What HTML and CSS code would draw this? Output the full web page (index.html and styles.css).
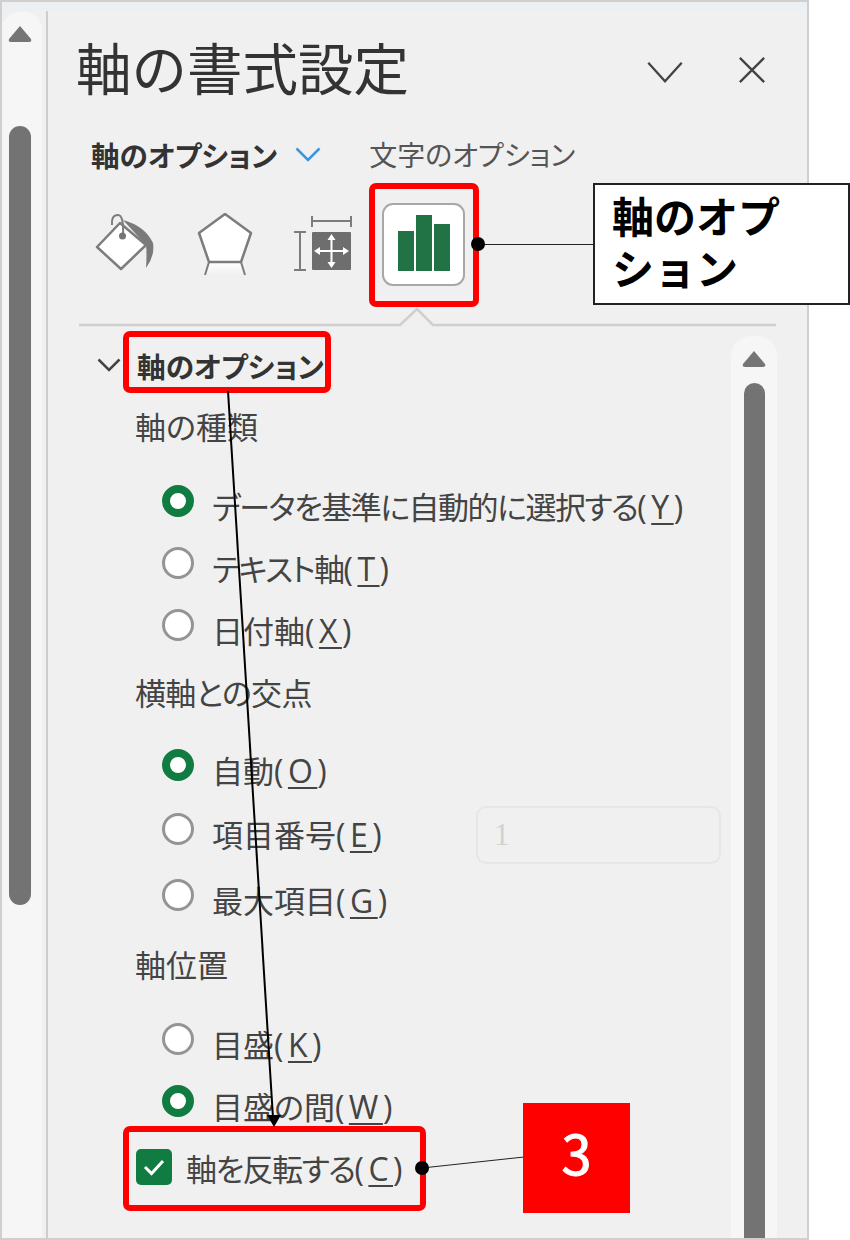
FILE: index.html
```html
<!DOCTYPE html>
<html lang="ja">
<head>
<meta charset="utf-8">
<title>軸の書式設定</title>
<link rel="stylesheet" href="styles.css">
</head>
<body>
<div class="page">
  <div class="pane">
    <div class="titlebar"></div>
    <div class="pane-body">
      <div class="rail">
        <div class="rail-track">
          <svg class="arrow-up" viewBox="0 0 24 18"><path d="M12 1 L23 14 Q24 17 21 17 L3 17 Q0 17 1 14 Z"/></svg>
          <div class="thumb thumb-left"></div>
        </div>
      </div>
      <div class="main">
        <div class="header">
          <h1 class="title">軸の書式設定</h1>
          <div class="header-actions">
            <svg class="hdr-icon" viewBox="0 0 40 28"><path d="M2 4 L20 24 L38 4"/></svg>
            <svg class="hdr-icon hdr-close" viewBox="0 0 30 30"><path d="M2 2 L28 28 M28 2 L2 28"/></svg>
          </div>
        </div>
        <div class="tabs">
          <span class="tab-active">軸のオプション</span>
          <svg class="tab-chevron" viewBox="0 0 26 15"><path d="M1.500 1.500 L13 13 L24.500 1.500"/></svg>
          <span class="tab-other">文字のオプション</span>
        </div>
        <div class="icon-row">
          <svg class="ico ico-fill" viewBox="0 0 64 64">
            <path class="ico-grey" d="M28 8 Q50 14 58 31 Q60 44 51 56 Q52 42 51 33 Z"/>
            <path class="ico-shape" d="M2 35 L25 11 L51 33 L26 57 Z"/>
            <path class="ico-line" d="M17 13 Q16 3 23 3 Q29 3 28 24"/>
            <circle class="ico-dot" cx="27.500" cy="24" r="3.500"/>
          </svg>
          <svg class="ico ico-shapeicon" viewBox="0 0 60 66">
            <defs>
              <linearGradient id="fade" x1="0" y1="0" x2="0" y2="1">
                <stop offset="0" stop-color="#fff"/>
                <stop offset="1" stop-color="#f0f0f0"/>
              </linearGradient>
            </defs>
            <path fill="url(#fade)" d="M14 49 H46 L50 62 H10 Z"/>
            <path class="ico-shape" d="M30 1 L56 20 L46 49 L14 49 L4 20 Z"/>
            <path class="ico-line" d="M14 49 L10 62 M46 49 L50 62"/>
          </svg>
          <svg class="ico ico-size" viewBox="0 0 60 62">
            <path class="ico-line" d="M0 20 H12 M6 20 V58 M0 58 H12 M18 9 H57 M18 4 V15 M57 4 V15"/>
            <rect class="ico-block" x="18" y="20" width="39" height="38" rx="1"/>
            <path class="ico-cross" d="M37.500 26 V52 M24 39 H51"/>
            <path class="ico-head" d="M37.500 22 L41.500 28 H33.500 Z M37.500 56 L41.500 50 H33.500 Z M20 39 L26 35 V43 Z M55 39 L49 35 V43 Z"/>
          </svg>
          <div class="ico-btn">
            <svg class="ico-bars" viewBox="0 0 54 56">
              <rect x="0" y="16" width="16" height="40"/>
              <rect x="18" y="0" width="16" height="56"/>
              <rect x="36" y="9" width="16" height="47"/>
            </svg>
          </div>
        </div>
        <svg class="separator" viewBox="0 0 740 20"><path d="M31 18 H352 L369 2 L385 18 H728"/></svg>
        <div class="content">
          <div class="options">
            <div class="section-head">
              <svg class="section-chevron" viewBox="0 0 24 14"><path d="M1.500 1.500 L12 12 L22.500 1.500"/></svg>
              <span class="section-title">軸のオプション</span>
            </div>
            <div class="group-label">軸の種類</div>
            <div class="row row-first"><span class="radio radio-on"></span><span><span class="tight">データを基準に自動的に選択する</span><span class="key">(<span class="u">Y</span>)</span></span></div>
            <div class="row"><span class="radio"></span><span><span class="tight">テキスト軸</span><span class="key">(<span class="u">T</span>)</span></span></div>
            <div class="row"><span class="radio"></span><span>日付軸<span class="key">(<span class="u">X</span>)</span></span></div>
            <div class="group-label"><span class="tight-label">横軸との交点</span></div>
            <div class="row row-first-b"><span class="radio radio-on"></span><span>自動<span class="key">(<span class="u">O</span>)</span></span></div>
            <div class="row row-tall"><span class="radio"></span><span class="row-text">項目番号<span class="key">(<span class="u">E</span>)</span></span><span class="field">1</span></div>
            <div class="row row-tall"><span class="radio"></span><span>最大項目<span class="key">(<span class="u">G</span>)</span></span></div>
            <div class="group-label">軸位置</div>
            <div class="row row-first"><span class="radio"></span><span>目盛<span class="key">(<span class="u">K</span>)</span></span></div>
            <div class="row"><span class="radio radio-on"></span><span>目盛の間<span class="key">(<span class="u">W</span>)</span></span></div>
            <div class="check-row">
              <span class="checkbox"><svg viewBox="0 0 36 36"><path d="M9 18 L15.500 24.500 L27 12"/></svg></span>
              <span><span class="tight">軸を反転する</span><span class="key">(<span class="u">C</span>)</span></span>
            </div>
          </div>
          <div class="v-scroll">
            <svg class="arrow-up" viewBox="0 0 24 18"><path d="M12 1 L23 14 Q24 17 21 17 L3 17 Q0 17 1 14 Z"/></svg>
            <div class="thumb thumb-right"></div>
          </div>
        </div>
      </div>
    </div>
  </div>

  <svg class="overlay" viewBox="0 0 850 1240">
    <rect class="mark" x="372" y="186" width="104" height="118" rx="4"/>
    <rect class="mark" x="126" y="334" width="202" height="56" rx="4"/>
    <rect class="mark" x="126" y="1129" width="297" height="79" rx="4"/>
    <path class="leader" d="M478 244.500 H594"/>
    <circle cx="478" cy="244" r="7"/>
    <path class="leader" d="M422 1168 L524 1157"/>
    <circle cx="422" cy="1168" r="7"/>
    <path class="arrow-line" d="M228 391 L273 1118"/>
    <path d="M274 1127 L267 1115 L281 1115 Z"/>
  </svg>
  <div class="callout">軸のオプ<br>ション</div>
  <div class="badge">3</div>
</div>
</body>
</html>
```
FILE: styles.css
```css
* { box-sizing: border-box; }
html, body { margin: 0; padding: 0; background: #fff; }
.page {
  position: relative;
  width: 850px;
  height: 1240px;
  overflow: hidden;
  font-family: "Noto Sans CJK JP", "Noto Sans", sans-serif;
  font-feature-settings: "palt";
  color: #444;
}
.pane {
  width: 809px;
  height: 1240px;
  display: flex;
  flex-direction: column;
  background: #f0f0f0;
  border: 2px solid #cfcfcf;
}
.titlebar { height: 9px; background: #ecf0f3; flex: none; }
.pane-body { flex: 1; display: flex; min-height: 0; }
.rail {
  width: 46px;
  flex: none;
  border-right: 2px solid #cdcdcd;
  padding-top: 1px;
}
.rail-track {
  width: 40px;
  height: 100%;
  background: #f6f6f6;
  border-radius: 18px 18px 0 0;
  display: flex;
  flex-direction: column;
  align-items: center;
  padding: 13px 4px 0 0;
}
.arrow-up { width: 24px; height: 18px; flex: none; display: block; }
.arrow-up path { fill: #757575; }
.thumb { background: #737373; border-radius: 11px 11px 0 0; width: 22px; }
.thumb-left { height: 779px; margin-top: 83px; border-radius: 11px; }
.thumb-right { flex: 1; margin-top: 15px; width: 21px; }
.main { flex: 1; min-width: 0; display: flex; flex-direction: column; position: relative; }
.header {
  height: 118px;
  flex: none;
  display: flex;
  align-items: center;
  justify-content: space-between;
  padding: 0 41px 0 28px;
}
.title {
  margin: -7px 0 0;
  font-size: 55.500px;
  font-weight: 400;
  line-height: 1;
  color: #333;
  font-feature-settings: normal;
}
.header-actions { display: flex; align-items: center; gap: 54px; }
.hdr-icon { width: 38px; height: 26px; display: block; fill: none; stroke: #444; stroke-width: 2.500; margin-top: 3px; }
.hdr-close { width: 28px; height: 28px; margin-top: 0; }
.tabs {
  height: 50px;
  flex: none;
  display: flex;
  align-items: center;
  padding-left: 43px;
  font-size: 28px;
}
.tab-active { font-weight: 700; color: #333; font-size: 28.600px; }
.tab-chevron { width: 26px; height: 15px; margin-left: 18px; fill: none; stroke: #3a96dd; stroke-width: 2.500; }
.tab-other { margin-left: 48px; color: #555; }
.icon-row {
  height: 134px;
  flex: none;
  padding: 24px 0 0 47px;
  display: flex;
  align-items: flex-start;
  position: relative;
}
.ico { display: block; flex: none; }
.ico-shape { fill: #fff; stroke: #7c7c7c; stroke-width: 2.500; stroke-linejoin: round; }
.ico-grey { fill: #7a7a7a; }
.ico-line { fill: none; stroke: #7c7c7c; stroke-width: 2; }
.ico-dot { fill: #757575; }
.ico-block { fill: #6e6e6e; }
.ico-cross { stroke: #fff; stroke-width: 2; fill: none; }
.ico-head { fill: #fff; }
.ico-fill { width: 64px; height: 64px; margin-top: 9px; }
.ico-shapeicon { width: 60px; height: 66px; margin-left: 36px; margin-top: 10px; }
.ico-size { width: 60px; height: 62px; margin-left: 39px; margin-top: 9px; }
.ico-btn {
  width: 83px;
  height: 83px;
  margin-left: 28px;
  background: #fff;
  border: 2px solid #a8a8a8;
  border-radius: 11px;
  flex: none;
  display: flex;
  align-items: center;
  justify-content: center;
}
.ico-bars { width: 54px; height: 56px; fill: #217346; margin-top: -3px; margin-left: 2px; }
.separator { display: block; width: 740px; height: 20px; flex: none; margin-top: -6px; }
.separator path { fill: none; stroke: #cfcfcf; stroke-width: 2.500; }
.content { flex: 1; min-height: 0; display: flex; position: relative; }
.options {
  flex: 1;
  min-width: 0;
  padding-top: 9px;
  font-family: "Noto Sans CJK JP", sans-serif;
  font-size: 31px;
}
.section-head {
  height: 58px;
  display: flex;
  align-items: center;
  padding-left: 49px;
}
.section-chevron { width: 24px; height: 14px; fill: none; stroke: #444; stroke-width: 2.500; }
.section-title { margin-left: 16px; font-weight: 700; color: #333; font-size: 28.700px; }
.group-label { height: 62px; display: flex; align-items: center; padding-left: 87px; }
.row {
  height: 62px;
  display: flex;
  align-items: center;
  padding-left: 114px;
  gap: 18px;
}
.row-first { margin-top: 18px; }
.row-first-b { margin-top: 16px; }
.row-tall { height: 66px; }
.radio {
  width: 32px;
  height: 32px;
  border-radius: 50%;
  background: #fff;
  border: 3px solid #949494;
  flex: none;
  margin-bottom: 9px;
}
.radio-on { border: 8px solid #107c41; }
.row-text { width: 246px; flex: none; }
.field {
  width: 245px;
  height: 58px;
  border: 2px solid #e6e6e6;
  border-radius: 10px;
  padding-left: 16px;
  color: #d2d2d2;
  font-family: "Liberation Serif", serif;
  display: flex;
  align-items: center;
  margin-top: 3px;
}
.tight { letter-spacing: -1.500px; }
.tight-label { letter-spacing: -0.700px; }
.key {
  font-family: "Open Sans", sans-serif;
  font-size: 32px;
  letter-spacing: 4.500px;
}
.u { text-decoration: underline; text-underline-offset: 4px; text-decoration-thickness: 2px; }
.check-row {
  height: 62px;
  display: flex;
  align-items: center;
  padding-left: 88px;
  gap: 14px;
}
.checkbox {
  width: 36px;
  height: 36px;
  background: #107c41;
  border-radius: 5px;
  flex: none;
  display: block;
}
.checkbox svg { display: block; width: 36px; height: 36px; fill: none; stroke: #fff; stroke-width: 3; }
.v-scroll {
  width: 46px;
  flex: none;
  margin-right: 30px;
  margin-top: 9px;
  background: #f6f6f6;
  border-radius: 20px 20px 0 0;
  display: flex;
  flex-direction: column;
  align-items: center;
  padding-top: 14px;
}
.overlay { position: absolute; left: 0; top: 0; width: 850px; height: 1240px; pointer-events: none; }
.mark { fill: none; stroke: #f00; stroke-width: 6; }
.leader { fill: none; stroke: #222; stroke-width: 1; }
.arrow-line { fill: none; stroke: #000; stroke-width: 2; }
.callout {
  position: absolute;
  left: 593px;
  top: 183px;
  width: 257px;
  height: 122px;
  background: #fff;
  border: 2px solid #222;
  padding: 4px 0 0 17px;
  font-size: 42px;
  line-height: 52px;
  font-weight: 700;
  color: #000;
  font-feature-settings: normal;
}
.badge {
  position: absolute;
  left: 523px;
  top: 1103px;
  width: 107px;
  height: 110px;
  background: #f00;
  color: #fff;
  font-size: 54px;
  -webkit-text-stroke: 1px #fff;
  display: flex;
  align-items: center;
  justify-content: center;
  padding-bottom: 14px;
}
```
